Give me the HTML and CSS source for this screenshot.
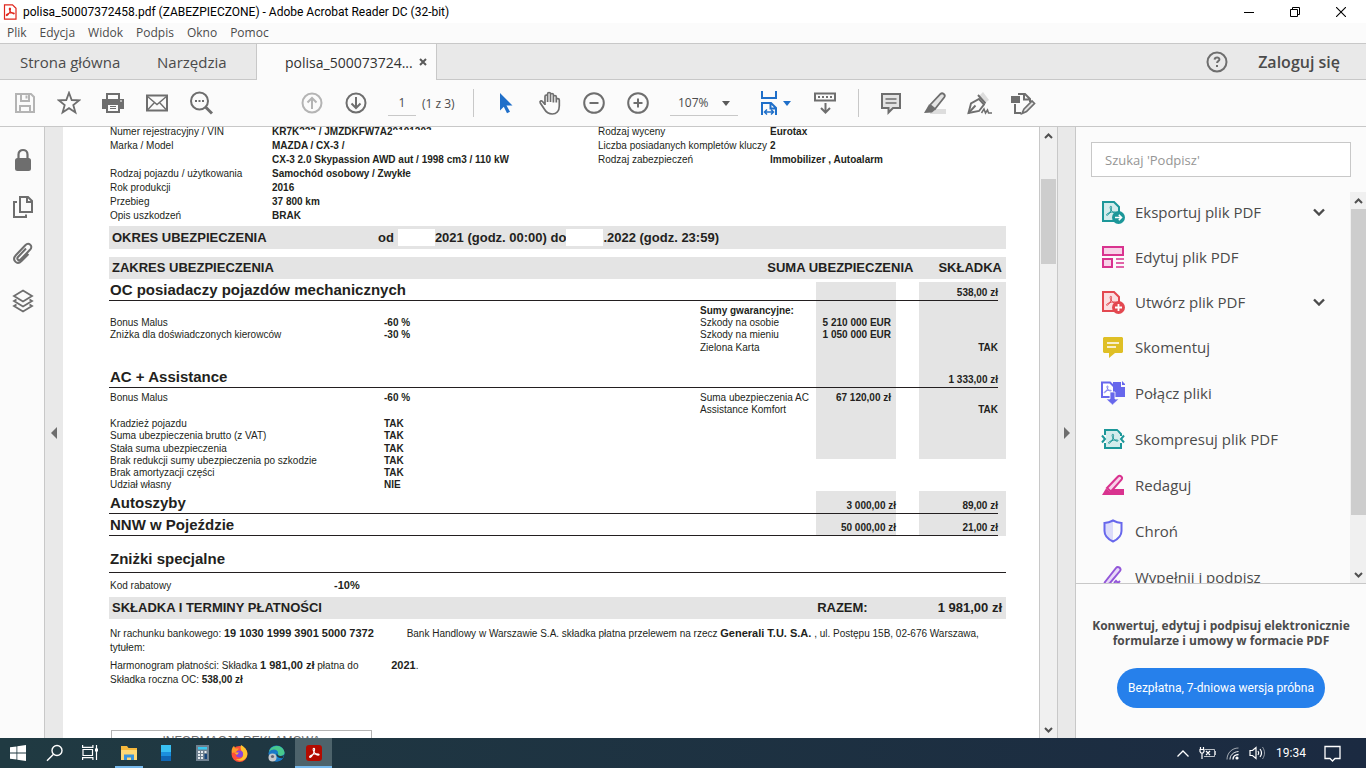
FILE: index.html
```html
<!DOCTYPE html>
<html lang="pl">
<head>
    <meta charset="UTF-8">
    <meta name="viewport" content="width=device-width, initial-scale=1.0">
    <title>polisa_50007372458.pdf (ZABEZPIECZONE) - Adobe Acrobat Reader DC (32-bit)</title>
    <link rel="stylesheet" href="styles.css">
</head>
<body>
    <!-- shared acrobat sign -->
    <svg class="defs" width="0" height="0" aria-hidden="true">
        <symbol id="acro" viewBox="0 0 12 12">
            <path d="M5.900 1.200c-1.200.1-.9 2 .1 3.700C7.100 6.900 8.600 8 10 8.200c1.200.1 1.500-.8.400-1.100C8.500 6.600 4.500 7.300 2.400 8.700c-1.300.9-1.100 2 .1 1.500C4.200 9.300 6.200 5.500 6.500 3.300 6.700 2 6.500 1.200 5.900 1.200z" fill="none" stroke="currentColor"/>
        </symbol>
    </svg>

    <header class="titlebar">
        <svg class="app-icon" width="14" height="16" viewBox="0 0 14 16"><path d="M1.500.8h8l3.500 3.500v10.900H1.500z" fill="#fff" stroke="#e0261c" stroke-width="1.200"/><svg x="2" y="3" width="10" height="10" color="#e0261c"><use href="#acro" stroke-width="1.300"/></svg></svg>
        <span class="title">polisa_50007372458.pdf (ZABEZPIECZONE) - Adobe Acrobat Reader DC (32-bit)</span>
        <div class="window-buttons">
            <button aria-label="Minimalizuj"><svg width="10" height="10"><path d="M0 5.500h10" stroke="#000"/></svg></button>
            <button aria-label="Przywróć"><svg width="10" height="10" fill="none" stroke="#000"><path d="M.5 2.500h7v7h-7zM2.500 2.500v-2h7v7h-2"/></svg></button>
            <button aria-label="Zamknij"><svg width="10" height="10"><path d="M0 0l10 10M10 0L0 10" stroke="#000" stroke-width="1.100"/></svg></button>
        </div>
    </header>

    <nav class="menubar">
        <a href="#">Plik</a>
        <a href="#">Edycja</a>
        <a href="#">Widok</a>
        <a href="#">Podpis</a>
        <a href="#">Okno</a>
        <a href="#">Pomoc</a>
    </nav>

    <div class="tabs">
        <a href="#" class="tab tab-home">Strona główna</a>
        <a href="#" class="tab tab-tools">Narzędzia</a>
        <div class="tab tab-active">
            <span>polisa_500073724...</span>
            <button class="tab-close" aria-label="Zamknij kartę"><svg width="8" height="8"><path d="M1 1l6 6M7 1L1 7" stroke="#5a5a5a" stroke-width="2"/></svg></button>
        </div>
        <button class="help" aria-label="Pomoc"><svg width="22" height="22" viewBox="0 0 22 22" fill="none" stroke="#6e6e6e" stroke-width="2"><circle cx="11" cy="11" r="9.500"/><path d="M8.600 8.600c.2-2.900 4.900-2.800 4.800-.2 0 1.600-2.300 1.700-2.300 3.600"/><path d="M11 14v2"/></svg></button>
        <a href="#" class="login">Zaloguj się</a>
    </div>

    <div class="toolbar">
        <div class="tools tools-file">
            <button aria-label="Zapisz" class="off"><svg width="24" height="24" fill="none" stroke="currentColor" stroke-width="2"><path d="M3 3h15l3 3v15H3z"/><path d="M8 3v7h8V3M7 21v-6h10v6M13.500 4.500v3"/></svg></button>
            <button aria-label="Gwiazdka"><svg width="24" height="24" fill="none" stroke="currentColor" stroke-width="1.800"><path d="M12 1.800l2.700 7.200 7.600.3-6 4.700 2.100 7.400L12 17.200l-6.400 4.200L7.700 14l-6-4.700L9.300 9z"/></svg></button>
            <button aria-label="Drukuj"><svg width="24" height="24" fill="currentColor"><path d="M5 2h14v6H5zM7 4v4h10V4z" fill-rule="evenodd"/><path d="M1 8h22v10h-4v-5H5v5H1z"/><path d="M5 12h14v10H5zm2 2v6h10v-6z" fill-rule="evenodd"/><path d="M9 15h6v1H9zm0 2h6v1H9z"/><path d="M19 9.500h2v1h-2z" fill="#fff"/></svg></button>
            <button aria-label="Wyślij"><svg width="24" height="24" fill="none" stroke="currentColor"><path d="M2 4.500h20v15H2z" stroke-width="2"/><path d="M2 5l10 8.500L22 5M2.500 19l7-7.500M21.500 19l-7-7.500" stroke-width="1.400"/></svg></button>
            <button aria-label="Znajdź"><svg width="24" height="24" fill="none" stroke="currentColor"><circle cx="10.500" cy="10" r="8.500" stroke-width="2"/><path d="M16.500 16l6.500 6.500" stroke-width="3"/><path d="M6 10h2M9.500 10h2M13 10h2" stroke-width="2"/></svg></button>
        </div>
        <div class="tools tools-page">
            <button aria-label="Poprzednia strona" class="off"><svg width="24" height="24" fill="none" stroke="currentColor" stroke-width="2"><circle cx="12" cy="12" r="9.500"/><path d="M12 18V7M7.500 11.500L12 7l4.500 4.500"/></svg></button>
            <button aria-label="Następna strona"><svg width="24" height="24" fill="none" stroke="currentColor" stroke-width="2"><circle cx="12" cy="12" r="9.500"/><path d="M12 6v11M7.500 12.500L12 17l4.500-4.500"/></svg></button>
            <input type="text" class="page-number" value="1" aria-label="Numer strony">
            <span class="page-count">(1 z 3)</span>
        </div>
        <div class="tools tools-view">
            <button aria-label="Zaznaczanie"><svg width="24" height="24" fill="#1f6fc9"><path d="M6 2l12.500 12.500h-6l3.500 6.200-3 1.500-3.200-6.500L6 19.500z"/></svg></button>
            <button aria-label="Rączka"><svg width="24" height="24" fill="none" stroke="currentColor" stroke-width="1.700"><path d="M7 14V5.500c0-2 2.600-2 2.600 0V11M9.600 5.500V3c0-2 2.900-2 2.900 0v8M12.500 4c0-2 2.900-2 2.900 0v7.500M15.400 6c0-2 2.900-2 2.900 0v5.500M18.300 9c0-2 3-1.700 3 0v6c0 5-3 8-7 8-4.500 0-6.300-2-8-5l-4-6c-1-2 1-2.700 2.200-1.500L7 13.500"/></svg></button>
            <button aria-label="Pomniejsz"><svg width="24" height="24" fill="none" stroke="currentColor" stroke-width="2"><circle cx="12" cy="12" r="9.800"/><path d="M7.500 12h9"/></svg></button>
            <button aria-label="Powiększ"><svg width="24" height="24" fill="none" stroke="currentColor" stroke-width="2"><circle cx="12" cy="12" r="9.800"/><path d="M7.500 12h9M12 7.500v9"/></svg></button>
            <div class="zoom">
                <select aria-label="Powiększenie"><option>107%</option></select>
            </div>
            <button aria-label="Dopasuj szerokość" class="fit"><svg width="20" height="24" fill="none" stroke="#1f6fc9" stroke-width="2"><path d="M3 0v7h14V0M3 24V12h9l5 5v7M11.500 12v5.500H17"/><path d="M5.500 21h9M8 18.500L5.500 21 8 23.500M12 18.500l2.500 2.500-2.500 2.500" stroke-width="1.500"/></svg></button>
            <button aria-label="Klawiatura"><svg width="24" height="24" fill="none" stroke="currentColor" stroke-width="2"><path d="M2 2.500h20v7H2z"/><path d="M5 6h2M9 6h2M13 6h2M17 6h2M12.500 12v9M8 17l4.500 4.500L17 17"/></svg></button>
        </div>
        <div class="tools tools-comment">
            <button aria-label="Komentarz"><svg width="24" height="24" fill="#e3e3e3" stroke="currentColor" stroke-width="2"><path d="M3 3h18v14h-7l-4.500 4.500V17H3z"/><path d="M6.500 8h11M6.500 12h11" stroke-width="1.400"/></svg></button>
            <button aria-label="Podświetlenie"><svg width="24" height="24"><path d="M7 18h16v5H7z" fill="#ddd"/><path d="M7 14L17.500 3c2-2 5.500 1 3.800 3.300L12 18z" fill="#e3e3e3" stroke="currentColor" stroke-width="1.800"/><path d="M6 13.500l6.500 5L9 21.500 1 22z" fill="currentColor"/></svg></button>
            <button aria-label="Podpis"><svg width="26" height="24" fill="none" stroke="currentColor" stroke-width="1.900"><path d="M13 5l4-4 6 8-4 3z" fill="#ddd" stroke="none"/><path d="M2.500 22L5 12.500l8-4.500 5 5.500L13 20z"/><path d="M12 4l7.500 8.500M2.500 22l7-7.500"/><path d="M15.500 22l2.500-4 1.500 4 2-3 1 3H26" stroke-width="1.500"/></svg></button>
            <button aria-label="Wypełnij"><svg width="26" height="24" fill="none" stroke="currentColor" stroke-width="2"><path d="M8 3h7l5 5v3M14 3v5.500h6M5 13v9h6"/><path d="M1 5h9v7H1z" fill="currentColor" stroke="none"/><path d="M14 18l8-8 2.500 2.500-8 8-4.500 2z" fill="#e3e3e3" stroke-width="1.700"/></svg></button>
        </div>
    </div>

    <main class="workspace">
        <aside class="rail">
            <button aria-label="Zabezpieczenia"><svg width="20" height="24" viewBox="0 0 20 24"><path d="M5.500 11V6.500c0-6 9-6 9 0V11" fill="none" stroke="#6e6e6e" stroke-width="2.200"/><rect x="2" y="10" width="16" height="13" rx="2.500" fill="#6e6e6e"/></svg></button>
            <button aria-label="Miniatury"><svg width="22" height="24" viewBox="0 0 22 24" fill="none" stroke="#6e6e6e" stroke-width="2"><path d="M8 2h8l4 4v11H8z"/><path d="M15 2v5h5M5 7H2v15h12v-2.500"/></svg></button>
            <button aria-label="Załączniki"><svg width="22" height="24" viewBox="0 0 22 24" fill="none" stroke="#6e6e6e" stroke-width="2"><path d="M14 6.500L6 15c-1.800 2 .8 4.400 2.600 2.500l9.600-10c3.300-3.600-1.500-7.800-4.900-4.300L3.800 13.300C-.5 18 5 23.500 9.500 19l7-7"/></svg></button>
            <button aria-label="Warstwy"><svg width="22" height="24" viewBox="0 0 22 24" fill="none" stroke="#6e6e6e" stroke-width="1.800"><path d="M11 1.500l9 5.500-9 5.500L2 7z"/><path d="M4.500 10.500L2 12l9 5.500 9-5.500-2.500-1.500M4.500 15.500L2 17l9 5.500 9-5.500-2.500-1.500"/></svg></button>
        </aside>
        <button class="gutter gutter-left" aria-label="Pokaż panel"><i class="arrow-left"></i></button>

        <article class="page">
            <div class="sheet">
                <div class="vehicle">
                    <table class="facts">
                        <tr><th>Numer rejestracyjny / VIN</th><td>KR7K<span class="covered">222</span> / JMZDKFW7A2<span class="covered">0101203</span></td></tr>
                        <tr><th>Marka / Model</th><td>MAZDA / CX-3 /</td></tr>
                        <tr><th></th><td>CX-3 2.0 Skypassion AWD aut / 1998 cm3 / 110 kW</td></tr>
                        <tr><th>Rodzaj pojazdu / użytkowania</th><td>Samochód osobowy / Zwykłe</td></tr>
                        <tr><th>Rok produkcji</th><td>2016</td></tr>
                        <tr><th>Przebieg</th><td>37 800 km</td></tr>
                        <tr><th>Opis uszkodzeń</th><td>BRAK</td></tr>
                    </table>
                    <table class="facts facts-right">
                        <tr><th>Rodzaj wyceny</th><td>Eurotax</td></tr>
                        <tr><th>Liczba posiadanych kompletów kluczy</th><td>2</td></tr>
                        <tr><th>Rodzaj zabezpieczeń</th><td>Immobilizer , Autoalarm</td></tr>
                    </table>
                </div>

                <div class="bar bar-period">
                    <h2>OKRES UBEZPIECZENIA</h2>
                    <span>od</span><i class="blank blank-from"></i><span>2021 (godz. 00:00) do</span><i class="blank"></i><span>.2022 (godz. 23:59)</span>
                </div>

                <div class="bar bar-scope">
                    <h2>ZAKRES UBEZPIECZENIA</h2>
                    <span class="bar-sum">SUMA UBEZPIECZENIA</span>
                    <span>SKŁADKA</span>
                </div>

                <table class="cover">
                    <colgroup><col class="c-label"><col><col class="c-desc"><col class="c-sum"><col class="c-gap"><col class="c-prem"><col class="c-edge"></colgroup>
                    <tr class="head"><th colspan="3">OC posiadaczy pojazdów mechanicznych</th><td class="sum"></td><td></td><td class="prem">538,00 zł</td><td class="edge"></td></tr>
                    <tr class="first"><td></td><td></td><td><b>Sumy gwarancyjne:</b></td><td class="sum"></td><td></td><td class="prem"></td><td class="edge"></td></tr>
                    <tr><td>Bonus Malus</td><td><b>-60 %</b></td><td>Szkody na osobie</td><td class="sum">5 210 000 EUR</td><td></td><td class="prem"></td><td class="edge"></td></tr>
                    <tr><td>Zniżka dla doświadczonych kierowców</td><td><b>-30 %</b></td><td>Szkody na mieniu</td><td class="sum">1 050 000 EUR</td><td></td><td class="prem"></td><td class="edge"></td></tr>
                    <tr class="tall"><td></td><td></td><td>Zielona Karta</td><td class="sum"></td><td></td><td class="prem">TAK</td><td class="edge"></td></tr>
                    <tr class="head head-spaced"><th colspan="3">AC + Assistance</th><td class="sum"></td><td></td><td class="prem">1 333,00 zł</td><td class="edge"></td></tr>
                    <tr class="first"><td>Bonus Malus</td><td><b>-60 %</b></td><td>Suma ubezpieczenia AC</td><td class="sum">67 120,00 zł</td><td></td><td class="prem"></td><td class="edge"></td></tr>
                    <tr><td></td><td></td><td>Assistance Komfort</td><td class="sum"></td><td></td><td class="prem">TAK</td><td class="edge"></td></tr>
                    <tr class="options"><td>Kradzież pojazdu</td><td><b>TAK</b></td><td></td><td class="sum"></td><td></td><td class="prem"></td><td class="edge"></td></tr>
                    <tr><td>Suma ubezpieczenia brutto (z VAT)</td><td><b>TAK</b></td><td></td><td class="sum"></td><td></td><td class="prem"></td><td class="edge"></td></tr>
                    <tr class="tall"><td>Stała suma ubezpieczenia</td><td><b>TAK</b></td><td></td><td class="sum"></td><td></td><td class="prem"></td><td class="edge"></td></tr>
                    <tr class="shade-end"><td>Brak redukcji sumy ubezpieczenia po szkodzie</td><td><b>TAK</b></td><td></td><td class="sum"></td><td></td><td class="prem"></td><td class="edge"></td></tr>
                    <tr><td>Brak amortyzacji części</td><td><b>TAK</b></td><td colspan="5"></td></tr>
                    <tr><td>Udział własny</td><td><b>NIE</b></td><td colspan="5"></td></tr>
                    <tr class="head head-first"><th colspan="3">Autoszyby</th><td class="sum">3 000,00 zł</td><td></td><td class="prem">89,00 zł</td><td class="edge"></td></tr>
                    <tr class="head head-short"><th colspan="3">NNW w Pojeździe</th><td class="sum">50 000,00 zł</td><td></td><td class="prem">21,00 zł</td><td class="edge"></td></tr>
                </table>

                <h3 class="discounts">Zniżki specjalne</h3>
                <div class="discount"><span>Kod rabatowy</span><b>-10%</b></div>

                <div class="bar bar-payment">
                    <h2>SKŁADKA I TERMINY PŁATNOŚCI</h2>
                    <span class="bar-total">RAZEM:</span>
                    <span>1 981,00 zł</span>
                </div>

                <div class="payment">
                    <p>Nr rachunku bankowego: <b>19 1030 1999 3901 5000 7372</b> <span class="bank">Bank Handlowy w Warszawie S.A. składka płatna przelewem na rzecz <b>Generali T.U. S.A.</b> , ul. Postępu 15B, 02-676 Warszawa,</span><br>tytułem:</p>
                    <p>Harmonogram płatności: Składka <b>1 981,00 zł</b> płatna do <b class="due">2021</b>.<br>Składka roczna OC: <b class="small">538,00 zł</b></p>
                </div>

                <div class="advert">INFORMACJA REKLAMOWA</div>
            </div>
        </article>

        <div class="scroll scroll-doc">
            <svg width="9" height="6"><path d="M1 5l3.500-3.500L8 5" fill="none" stroke="#505050" stroke-width="2"/></svg>
            <div class="thumb"></div>
            <svg class="down" width="9" height="6"><path d="M1 1l3.500 3.500L8 1" fill="none" stroke="#505050" stroke-width="2"/></svg>
        </div>
        <button class="gutter gutter-right" aria-label="Ukryj panel"><i class="arrow-right"></i></button>

        <aside class="panel">
            <input type="search" class="search" placeholder="Szukaj 'Podpisz'" aria-label="Szukaj">
            <div class="panel-list">
                <ul>
                    <li><a href="#"><svg width="24" height="24"><path d="M2 2h11l5 5v14H2z" fill="#d4ecec" stroke="#1c9799" stroke-width="2"/><svg x="4" y="5" width="12" height="12" color="#1c9799"><use href="#acro"/></svg><circle cx="17.500" cy="17.500" r="6.500" fill="#1c9799"/><path d="M14 17.500h6M17.800 14.800l2.700 2.700-2.700 2.700" fill="none" stroke="#fff" stroke-width="1.600"/></svg><span>Eksportuj plik PDF</span><svg class="chevron" width="12" height="8"><path d="M1 1.500l5 5 5-5" fill="none" stroke="#4b4b4b" stroke-width="2.400"/></svg></a></li>
                    <li><a href="#"><svg width="24" height="24" fill="#f8d2e8" stroke="#d9338f" stroke-width="2"><path d="M2 2h20v8H2zM2 14h9v8H2z"/><path d="M15 14h8M15 18h8M15 22h8" stroke-width="1.400"/></svg><span>Edytuj plik PDF</span></a></li>
                    <li><a href="#"><svg width="24" height="24"><path d="M2 2h11l5 5v14H2z" fill="#fbdfe1" stroke="#e34850" stroke-width="2"/><svg x="4" y="5" width="12" height="12" color="#e34850"><use href="#acro"/></svg><circle cx="17.500" cy="17.500" r="6.500" fill="#e34850"/><path d="M14 17.500h7M17.500 14v7" stroke="#fff" stroke-width="1.800"/></svg><span>Utwórz plik PDF</span><svg class="chevron" width="12" height="8"><path d="M1 1.500l5 5 5-5" fill="none" stroke="#4b4b4b" stroke-width="2.400"/></svg></a></li>
                    <li><a href="#"><svg width="24" height="24"><path d="M3 2h18l1 1v14l-1 1h-7l-6 5v-5H3l-1-1V3z" fill="#dfbf25"/><path d="M6 8h12M6 12h9" stroke="#fff" stroke-width="1.600"/></svg><span>Skomentuj</span></a></li>
                    <li><a href="#"><svg width="24" height="24"><path d="M12 1h8v5h4v10H12z" fill="#6767ec"/><path d="M21 0l4 4h-4z" fill="#6767ec"/><path d="M1 1.500h8l4 4V16H1z" fill="#fff" stroke="#6767ec" stroke-width="2"/><svg x="2" y="4" width="9" height="9" color="#6767ec"><use href="#acro"/></svg><path d="M9 11h5v7h4l-6.500 6L5 18h4z" fill="#6767ec" stroke="#fbfbfb" stroke-width=".8"/></svg><span>Połącz pliki</span></a></li>
                    <li><a href="#"><svg width="24" height="24" fill="none" stroke="#1c9799" stroke-width="2"><path d="M4 8V3h12l4 4v2M4 16v5h16v-5" fill="#d4ecec"/><path d="M5 4h11l3 4v12H5z" fill="#d4ecec" stroke="none"/><svg x="6" y="6" width="12" height="12" color="#1c9799"><use href="#acro" stroke-width="1"/></svg><path d="M1 8.500L4 12l-3 3.500M23 8.500L20 12l3 3.500"/></svg><span>Skompresuj plik PDF</span></a></li>
                    <li><a href="#"><svg width="24" height="24"><path d="M12 16h11v6H7z" fill="#d9338f"/><path d="M6 15L17 3.500c2-2 5.500 1 3.500 3.200L10 18.500z" fill="#f8d2e8" stroke="#d9338f" stroke-width="2"/><path d="M5 15.500l5 4-1 2.500H1z" fill="#d9338f"/></svg><span>Redaguj</span></a></li>
                    <li><a href="#"><svg width="24" height="24"><path d="M12 2v20C5 19 3 16 3 11V4c4 0 6-.6 9-2z" fill="#dcdcfa"/><path d="M12 1.500c3 1.600 5.500 2.300 8.500 2.500v8c0 5-3 8-8.500 10.500C6.500 20 3.500 17 3.500 12V4C6.500 3.800 9 3.100 12 1.500z" fill="none" stroke="#6767ec" stroke-width="2"/></svg><span>Chroń</span></a></li>
                    <li><a href="#"><svg width="24" height="24"><path d="M4 17L15 3c2-2.500 6 .5 4 3L9 18l-7 4z" fill="#e8d9f8" stroke="#9256d9" stroke-width="2"/><path d="M13 18l2-2 2 2 2-2" fill="none" stroke="#9256d9" stroke-width="2"/></svg><span>Wypełnij i podpisz</span></a></li>
                </ul>
                <div class="scroll scroll-panel">
                    <svg width="9" height="6"><path d="M1 5l3.500-3.500L8 5" fill="none" stroke="#505050" stroke-width="2"/></svg>
                    <div class="thumb"></div>
                    <svg class="down" width="9" height="6"><path d="M1 1l3.500 3.500L8 1" fill="none" stroke="#505050" stroke-width="2"/></svg>
                </div>
            </div>
            <div class="promo">
                <p>Konwertuj, edytuj i podpisuj elektronicznie<br>formularze i umowy w formacie PDF</p>
                <button>Bezpłatna, 7-dniowa wersja próbna</button>
            </div>
        </aside>
    </main>

    <footer class="taskbar">
        <button aria-label="Start"><svg width="16" height="16" fill="#fff"><path d="M0 2.300L6.500 1.400v6.200H0zM7.300 1.300L16 0v7.600H7.300zM0 8.400h6.500v6.200L0 13.700zM7.300 8.400H16V16l-8.700-1.300z"/></svg></button>
        <button aria-label="Szukaj"><svg width="18" height="18" fill="none" stroke="#fff" stroke-width="1.400"><circle cx="11" cy="6.500" r="5"/><path d="M7.500 10.200L1 16.800"/></svg></button>
        <button aria-label="Widok zadań"><svg width="22" height="18" fill="none" stroke="#fff" stroke-width="1.200"><path d="M2 5.500h9.500v6H2zM1.600 1v2.400h10.300V1M1.600 16v-2.400h10.300V16M15.500 1v15"/><path d="M14 4.500h3v3h-3z" fill="#fff" stroke="none"/></svg></button>
        <button aria-label="Eksplorator plików" class="running"><svg width="18" height="16"><path d="M1 1h6l1.500 2H17v12H1z" fill="#f5b83d"/><path d="M1 5h16v10H1z" fill="#ffd975"/><path d="M4 15V9.500h10V15h-3v-2.500H7V15z" fill="#3a94dc"/></svg></button>
        <button aria-label="Telefon"><svg width="10" height="16"><path d="M0 0h10v16H0z" fill="#0f67b5"/><path d="M0 0h10v11H0z" fill="#1b90dd"/><path d="M0 0h10v7H0z" fill="#39c0f2"/></svg></button>
        <button aria-label="Kalkulator"><svg width="13" height="16"><path d="M0 0h13v16H0z" fill="#6f8190"/><path d="M2 2h9v2.500H2z" fill="#39c8f0"/><path d="M2 6h2v2H2zM5 6h2v2H5zM2 9h2v2H2zM5 9h2v2H5zM2 12h2v2H2zM5 12h2v2H5zM8.500 6h2v2h-2z" fill="#e6ebef"/><path d="M8.500 9h2.500v5H8.500z" fill="#17467c"/></svg></button>
        <button aria-label="Firefox"><svg width="17" height="17"><circle cx="8.500" cy="9" r="8" fill="#ff4f3a"/><path d="M10 0c6 3.500 7 8 6 11-1.500 5-8 6-11 3 6 1 8-3 6.500-6C10 5 9 3 10 0z" fill="#ffc42e"/><path d="M1 8C0 5 1.500 2 3 1l1.500 2.500H8L5 7z" fill="#ff9a2a"/><circle cx="8.500" cy="9" r="3.600" fill="#8a45dc"/><path d="M3 7.500h5L6 10z" fill="#ffb32c"/></svg></button>
        <button aria-label="Edge"><svg width="17" height="17"><circle cx="8.500" cy="8.500" r="8" fill="#1685d3"/><path d="M1 7C2 0 14-2 16.500 7c.6 4-5 5-6.500 3 1.500-4-4-7-9-3z" fill="#48c98d"/><path d="M1 7c3-4 9-3 9 1-2-2-5 0-4 3 1 3 5 4 9 2-3 5-13 5-14-3z" fill="#1b78c6"/><path d="M9 8c0 3 4 4 7 2l-1 3c-4 1-8-2-6-5z" fill="#203840"/><circle cx="4.500" cy="12.500" r="4" fill="#c6c9cc"/><circle cx="4.500" cy="11.500" r="1.600" fill="#667"/></svg></button>
        <button aria-label="Acrobat Reader" class="running current"><svg width="16" height="16"><rect width="16" height="16" rx="3" fill="#b30b00"/><svg x="2" y="2" width="12" height="12" color="#fff"><use href="#acro" stroke-width="1.100"/></svg></svg></button>

        <div class="tray">
            <svg width="12" height="7"><path d="M.5 6.500L6 1l5.500 5.500" fill="none" stroke="#fff" stroke-width="1.300"/></svg>
            <svg width="17" height="14" fill="none" stroke="#fff"><path d="M6 3.500h9.500v7H5M16.500 5v4" opacity=".7"/><path d="M3 13V7M1 3.500h4v2L4 7H2L1 5.500zM1.500 1v2.500M4.500 1v2.500M7 5l4 4M11 5L7 9" stroke-width="1.200"/></svg>
            <svg width="13" height="13" fill="none" stroke="#fff"><path d="M4 12.500C4 8.500 7 5 12.500 4.500" opacity=".9"/><path d="M1 12.500C1 6 6 1 12.500 1" opacity=".6"/><path d="M7 12.500c0-3 2.500-5 5.500-5" stroke-width="1.400"/><circle cx="11" cy="11" r="1.600" fill="#fff" stroke="none"/></svg>
            <svg width="17" height="14" fill="none" stroke="#fff"><path d="M1 4.500h2.500L7 1.500v11L3.500 9.500H1z" stroke-width="1.200"/><path d="M9 5c1 1.300 1 2.700 0 4M11 3c2 2.600 2 5.400 0 8" stroke-width="1.200"/><path d="M13.500 1c2.700 4 2.700 8 0 12" opacity=".5"/></svg>
            <time>19:34</time>
            <svg class="notice" width="17" height="17"><path d="M1 1.500h15v12h-5L8.500 16 6 13.500H1z" fill="none" stroke="#fff" stroke-width="1.300"/></svg>
        </div>
    </footer>
</body>
</html>
```
FILE: styles.css
```css
* {
    box-sizing: border-box;
}
body {
    margin: 0;
    height: 100vh;
    display: flex;
    flex-direction: column;
    overflow: hidden;
    font-family: 'Segoe UI', 'Open Sans', 'Noto Sans', sans-serif;
    font-size: 12px;
    color: #4b4b4b;
    background: #fbfbfb;
}
button {
    border: none;
    padding: 0;
    background: none;
    color: inherit;
    font-family: inherit;
    display: flex;
    align-items: center;
    justify-content: center;
}
a {
    color: inherit;
    text-decoration: none;
}
svg {
    flex-shrink: 0;
}
.defs {
    position: absolute;
}

/* title + menu */
.titlebar {
    height: 23px;
    flex-shrink: 0;
    display: flex;
    align-items: center;
    padding-left: 3px;
    background: #fff;
    color: #000;
}
.title {
    margin-left: 6px;
    font-family: 'Segoe UI', Roboto, sans-serif;
    font-size: 12px;
}
.window-buttons {
    margin-left: auto;
    display: flex;
    margin-right: 2px;
}
.window-buttons button {
    width: 46px;
    height: 22px;
}
.menubar {
    height: 20px;
    flex-shrink: 0;
    display: flex;
    align-items: center;
    gap: 13px;
    padding: 0 7px 1px;
}

/* tabs */
.tabs {
    height: 37px;
    flex-shrink: 0;
    display: flex;
    align-items: center;
    background: #e9e9e9;
    border-top: 1px solid #c8c8c8;
    border-bottom: 1px solid #c8c8c8;
    font-size: 15px;
}
.tab-home {
    width: 157px;
    padding-left: 20px;
}
.tab-tools {
    width: 99px;
}
.tab-active {
    width: 181px;
    height: 36px;
    margin-bottom: -1px;
    display: flex;
    align-items: center;
    padding-left: 28px;
    background: #fbfbfb;
    border-left: 1px solid #c8c8c8;
    border-right: 1px solid #c8c8c8;
    font-size: 14px;
    color: #323232;
}
.tab-close {
    margin-left: auto;
    margin-right: 9px;
}
.help {
    margin-left: auto;
}
.login {
    margin: 0 26px 0 30px;
    font-size: 16px;
    font-weight: 600;
}

/* toolbar */
.toolbar {
    height: 47px;
    flex-shrink: 0;
    display: flex;
    align-items: center;
    padding-left: 3px;
    border-bottom: 1px solid #c8c8c8;
    color: #6e6e6e;
}
.tools {
    display: flex;
    align-items: center;
}
.tools button {
    width: 44px;
    height: 44px;
}
.tools .off {
    color: #b4b4b4;
}
.tools-page {
    margin-left: 67px;
    width: 183px;
}
.page-number {
    width: 28px;
    height: 26px;
    margin: 0 6px 0 10px;
    padding: 0;
    border: none;
    border-bottom: 1px solid #c8c8c8;
    background: none;
    text-align: center;
    font-family: inherit;
    font-size: 12px;
    color: #4b4b4b;
}
.page-count {
    color: #4b4b4b;
}
.tools-view {
    padding-left: 10px;
    border-left: 1px solid #c8c8c8;
    height: 28px;
}
.zoom {
    position: relative;
    width: 68px;
    height: 26px;
    margin-left: 10px;
    border-bottom: 1px solid #c8c8c8;
}
.zoom select {
    appearance: none;
    width: 100%;
    height: 25px;
    padding: 0 0 0 8px;
    border: none;
    background: none;
    font-family: inherit;
    font-size: 12px;
    color: #4b4b4b;
}
.zoom::after,
.fit::after {
    content: "";
    border: 4px solid transparent;
    border-top: 5px solid #5a5a5a;
    border-bottom: none;
}
.zoom::after {
    position: absolute;
    right: 8px;
    top: 11px;
}
.tools-view .fit {
    width: 46px;
    margin-left: 14px;
    gap: 4px;
}
.fit::after {
    border-top-color: #1f6fc9;
}
.tools-view button:last-child {
    margin-left: 5px;
    margin-right: 11px;
}
.tools-comment {
    padding-left: 10px;
    border-left: 1px solid #c8c8c8;
    height: 28px;
}

/* work area */
.workspace {
    flex: 1;
    min-height: 0;
    display: flex;
}
.rail {
    width: 45px;
    border-right: 1px solid #c8c8c8;
    padding-top: 9px;
}
.rail button {
    width: 45px;
    height: 47px;
}
.gutter {
    width: 18px;
    background: #e9e9e9;
}
.arrow-left,
.arrow-right {
    border: 6px solid transparent;
}
.arrow-left {
    border-right-color: #6e6e6e;
    border-left: none;
}
.arrow-right {
    border-left-color: #6e6e6e;
    border-right: none;
}
.gutter-right {
    width: 19px;
    border-left: 1px solid #c8c8c8;
    border-right: 1px solid #c8c8c8;
}

/* scrollbars */
.scroll {
    display: flex;
    flex-direction: column;
    align-items: center;
    padding: 6px 0 5px;
    background: #f0f0f0;
}
.scroll .thumb {
    width: 15px;
    background: #cdcdcd;
}
.scroll .down {
    margin-top: auto;
}
.scroll-doc {
    width: 18px;
    border-left: 1px solid #c8c8c8;
}
.scroll-doc .thumb {
    height: 85px;
    margin-top: 40px;
}

/* pdf page */
.page {
    flex: 1;
    min-width: 0;
    overflow: hidden;
    background: #fff;
    font-family: Arial, 'Liberation Sans', sans-serif;
    font-size: 10px;
    color: #231f20;
}
.sheet {
    margin: -2px 33px 0 46px;
}
.sheet h2,
.sheet h3,
.sheet p {
    margin: 0;
}
table {
    border-collapse: collapse;
}
th {
    font-weight: normal;
    text-align: left;
}
th,
td {
    padding: 0;
}
.vehicle {
    display: flex;
    align-items: flex-start;
    height: 101px;
    padding-left: 1px;
}
.facts {
    width: 488px;
    table-layout: fixed;
    line-height: 14px;
    white-space: nowrap;
}
.facts tr {
    height: 14px;
}
.facts th {
    width: 162px;
}
.facts td {
    font-weight: bold;
}
.facts-right {
    width: auto;
    flex: 1;
}
.facts-right th {
    width: 172px;
}
.covered {
    display: inline-block;
    height: 5px;
    overflow: hidden;
    vertical-align: top;
}
.bar {
    display: flex;
    align-items: center;
    height: 22px;
    padding: 0 4px 1px 3px;
    background: #e4e4e4;
    font-size: 13px;
    font-weight: bold;
}
.bar h2 {
    font-size: 13px;
}
.bar-period {
    height: 23px;
    margin-bottom: 8px;
}
.bar-period h2 {
    width: 266px;
}
.blank {
    width: 37px;
    height: 17px;
    background: #fff;
}
.blank-from {
    margin-left: 4px;
}
.bar-sum,
.bar-total {
    margin-left: auto;
}
.bar-sum {
    margin-right: 25px;
}
.bar-total {
    margin-right: 70px;
}
.cover {
    width: 100%;
    margin-top: 3px;
    table-layout: fixed;
    line-height: 12px;
    white-space: nowrap;
    border-collapse: separate;
    border-spacing: 0;
}
.cover td:first-child,
.cover th:first-child {
    padding-left: 1px;
}
.c-label {
    width: 275px;
}
.c-desc {
    width: 116px;
}
.c-sum {
    width: 80px;
}
.c-gap {
    width: 23px;
}
.c-prem {
    width: 79px;
}
.c-edge {
    width: 8px;
}
.cover tr {
    height: 12px;
}
.cover td {
    vertical-align: bottom;
}
.cover .sum,
.cover .prem {
    background: #e4e4e4;
    text-align: right;
    font-weight: bold;
}
.cover .sum {
    padding-right: 5px;
}
.cover .edge {
    background: #e4e4e4;
}
.cover .head {
    height: 19px;
}
.head th {
    font-size: 15px;
    font-weight: bold;
    line-height: 16px;
    vertical-align: bottom;
    padding-bottom: 2px;
}
.head th,
.head td {
    border-bottom: 1px solid #231f20;
}
.head td {
    padding-bottom: 1px;
}
.head .edge {
    border-bottom: none;
}
.cover .head-spaced {
    height: 34px;
}
.cover .head-first {
    height: 23px;
}
.cover .head-short {
    height: 22px;
}
.head-first .sum,
.head-short .sum {
    padding-right: 0;
}
.cover .first {
    height: 16px;
}
.cover .options {
    height: 14px;
}
.cover .tall {
    height: 13px;
}
.cover .shade-end .sum,
.cover .shade-end .prem,
.cover .shade-end .edge {
    background: linear-gradient(#e4e4e4, #e4e4e4) no-repeat top / 100% 4px;
}
.discounts {
    padding: 14px 0 4px 1px;
    border-bottom: 1px solid #231f20;
    font-size: 15px;
    line-height: 18px;
}
.discount {
    display: flex;
    align-items: center;
    height: 24px;
    padding-left: 1px;
}
.discount span {
    width: 224px;
}
.discount b,
.payment b {
    font-size: 11px;
}
.payment {
    padding: 7px 0 0 1px;
    line-height: 14px;
}
.sheet .payment p {
    margin-bottom: 3px;
    white-space: nowrap;
}
.payment .small {
    font-size: 10px;
}
.bank {
    margin-left: 30px;
}
.due {
    margin-left: 30px;
}
.advert {
    width: 261px;
    height: 60px;
    margin: 43px 0 0 2px;
    padding-top: 3px;
    border: 1px solid #b4b4b4;
    text-align: center;
    font-size: 12px;
    color: #6e6e6e;
}

/* right panel */
.panel {
    width: 290px;
    display: flex;
    flex-direction: column;
}
.search {
    height: 35px;
    margin: 15px 15px 12px;
    padding: 0 13px;
    border: 1px solid #c8c8c8;
    background: #fff;
    font-family: inherit;
    font-size: 13px;
}
.search::placeholder {
    color: #959595;
}
.panel-list {
    flex: 1;
    min-height: 0;
    display: flex;
    overflow: hidden;
}
.panel-list ul {
    flex: 1;
    margin: 0;
    padding: 0 0 0 25px;
    list-style: none;
    font-size: 15px;
}
.panel-list a {
    display: flex;
    align-items: center;
    height: 45px;
    padding-right: 25px;
}
.panel-list li:nth-child(n+4) a {
    height: 46px;
}
.panel-list span {
    margin-left: 10px;
}
.chevron {
    margin-left: auto;
}
.scroll-panel {
    width: 16px;
    margin-top: 3px;
}
.scroll-panel .thumb {
    height: 306px;
    margin-top: 5px;
}
.promo {
    height: 155px;
    display: flex;
    flex-direction: column;
    align-items: center;
    padding-top: 34px;
    border-top: 1px solid #c8c8c8;
}
.promo p {
    margin: 0 0 20px;
    text-align: center;
    font-weight: bold;
    line-height: 15px;
    white-space: nowrap;
}
.promo button {
    width: 208px;
    height: 40px;
    border-radius: 20px;
    background: #2680eb;
    color: #fff;
    font-family: 'Segoe UI', Roboto, sans-serif;
    font-size: 12px;
}

/* taskbar */
.taskbar {
    height: 30px;
    flex-shrink: 0;
    display: flex;
    background: linear-gradient(to right, #203a42, #1b2a41);
}
.taskbar button {
    width: 37px;
    height: 30px;
}
.taskbar button:first-child {
    width: 36px;
}
.taskbar .running {
    background: linear-gradient(#76b9ed, #76b9ed) no-repeat center bottom / 28px 2px;
}
.taskbar .current {
    background: linear-gradient(#76b9ed, #76b9ed) no-repeat center bottom / 100% 2px #4d636b;
}
.tray {
    margin-left: auto;
    display: flex;
    align-items: center;
    gap: 10px;
    padding-right: 25px;
    font-family: 'Segoe UI', Roboto, sans-serif;
    color: #fff;
}
.notice {
    margin-left: 8px;
}
```
